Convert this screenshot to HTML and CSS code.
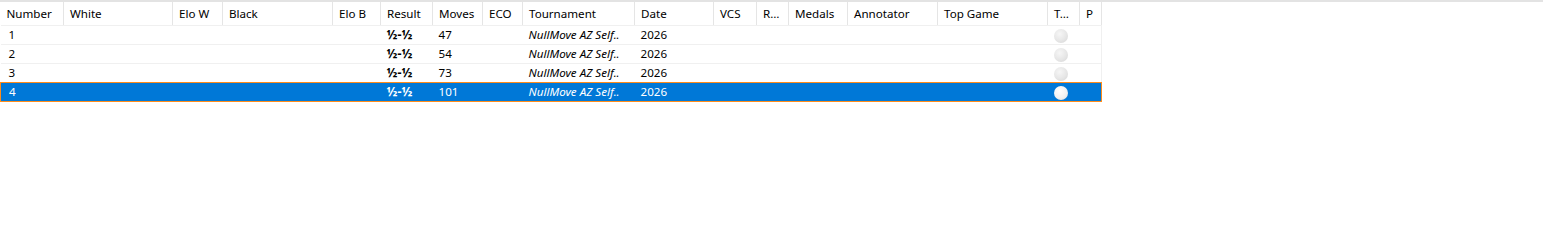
FILE: index.html
```html
<!DOCTYPE html>
<html lang="en">
<head>
    <meta charset="UTF-8">
    <title>Games</title>
    <link rel="stylesheet" href="styles.css">
</head>
<body>
<div class="list">
<table class="games">
    <colgroup>
        <col class="c-num"><col class="c-white"><col class="c-elow"><col class="c-black"><col class="c-elob">
        <col class="c-res"><col class="c-moves"><col class="c-eco"><col class="c-tour"><col class="c-date">
        <col class="c-vcs"><col class="c-r"><col class="c-medals"><col class="c-ann"><col class="c-top">
        <col class="c-t"><col class="c-p">
    </colgroup>
    <thead>
    <tr>
        <th>Number</th><th>White</th><th>Elo W</th><th>Black</th><th>Elo B</th>
        <th>Result</th><th>Moves</th><th>ECO</th><th>Tournament</th><th>Date</th>
        <th>VCS</th><th>R…</th><th>Medals</th><th>Annotator</th><th>Top Game</th>
        <th>T…</th><th>P</th>
    </tr>
    </thead>
    <tbody>
    <tr>
        <td class="num">1</td><td></td><td></td><td></td><td></td>
        <td class="res">½-½</td><td>47</td><td></td><td class="tour">NullMove AZ Self..</td><td>2026</td>
        <td></td><td></td><td></td><td></td><td></td>
        <td class="dot"><span class="ball"></span></td><td></td>
    </tr>
    <tr>
        <td class="num">2</td><td></td><td></td><td></td><td></td>
        <td class="res">½-½</td><td>54</td><td></td><td class="tour">NullMove AZ Self..</td><td>2026</td>
        <td></td><td></td><td></td><td></td><td></td>
        <td class="dot"><span class="ball"></span></td><td></td>
    </tr>
    <tr class="before-sel">
        <td class="num">3</td><td></td><td></td><td></td><td></td>
        <td class="res">½-½</td><td>73</td><td></td><td class="tour">NullMove AZ Self..</td><td>2026</td>
        <td></td><td></td><td></td><td></td><td></td>
        <td class="dot"><span class="ball"></span></td><td></td>
    </tr>
    <tr class="selected">
        <td class="num">4</td><td></td><td></td><td></td><td></td>
        <td class="res">½-½</td><td>101</td><td></td><td class="tour">NullMove AZ Self..</td><td>2026</td>
        <td></td><td></td><td></td><td></td><td></td>
        <td class="dot"><span class="ball"></span></td><td></td>
    </tr>
    </tbody>
</table>
</div>
</body>
</html>
```

FILE: styles.css
```css
body {
    margin: 0;
    background: #fff;
    font-family: "Noto Sans", "Open Sans", sans-serif;
    font-size: 11.6px;
    color: #000;
}

.list {
    border-top: 2px solid #e3e3e3;
}

/* Таблица партий */
.games {
    table-layout: fixed;
    border-collapse: collapse;
    width: 1101px;
}

.c-num { width: 63px; }
.c-white { width: 109px; }
.c-elow { width: 50px; }
.c-black { width: 110px; }
.c-elob { width: 48px; }
.c-res { width: 52px; }
.c-moves { width: 50px; }
.c-eco { width: 40px; }
.c-tour { width: 112px; }
.c-date { width: 79px; }
.c-vcs { width: 43px; }
.c-r { width: 32px; }
.c-medals { width: 59px; }
.c-ann { width: 90px; }
.c-top { width: 110px; }
.c-t { width: 32px; }
.c-p { width: 22px; }

.games th {
    height: 23px;
    padding: 0 0 0 6px;
    text-align: left;
    font-weight: normal;
    white-space: nowrap;
    overflow: hidden;
    border-right: 1px solid #e5e5e5;
    border-bottom: 1px solid #f0f0f0;
}

.games td {
    height: 18px;
    padding: 0 0 0 6px;
    white-space: nowrap;
    overflow: hidden;
    border-bottom: 1px solid #f0f0f0;
    line-height: 18px;
}

.games td:last-child {
    border-right: 1px solid #f0f0f0;
}

.games td.num {
    padding-left: 8px;
}

.games td.res {
    font-weight: bold;
    font-size: 12.5px;
}

.games td.tour {
    font-style: italic;
}

.games td.dot {
    padding: 0 5px 0 0;
    text-align: center;
}

.ball {
    display: inline-block;
    width: 14px;
    height: 14px;
    border-radius: 50%;
    vertical-align: middle;
    background: radial-gradient(circle at 40% 35%, #f6f6f6 0%, #e6e6e6 55%, #d4d4d4 100%);
}

/* Выделенная строка */
.games tr.before-sel td {
    border-bottom-color: #ff8c1a;
}

.games tr.selected td {
    background: #0078d7;
    color: #fff;
    border-bottom: 1px solid #ff8c1a;
}

.games tr.selected td:first-child {
    border-left: 1px solid #ff8c1a;
}

.games tr.selected td:last-child {
    border-right: 1px solid #ff8c1a;
}

.games tr.selected .ball {
    background: radial-gradient(circle at 40% 35%, #ffffff 0%, #f2f2f2 55%, #dcdcdc 100%);
}
```
